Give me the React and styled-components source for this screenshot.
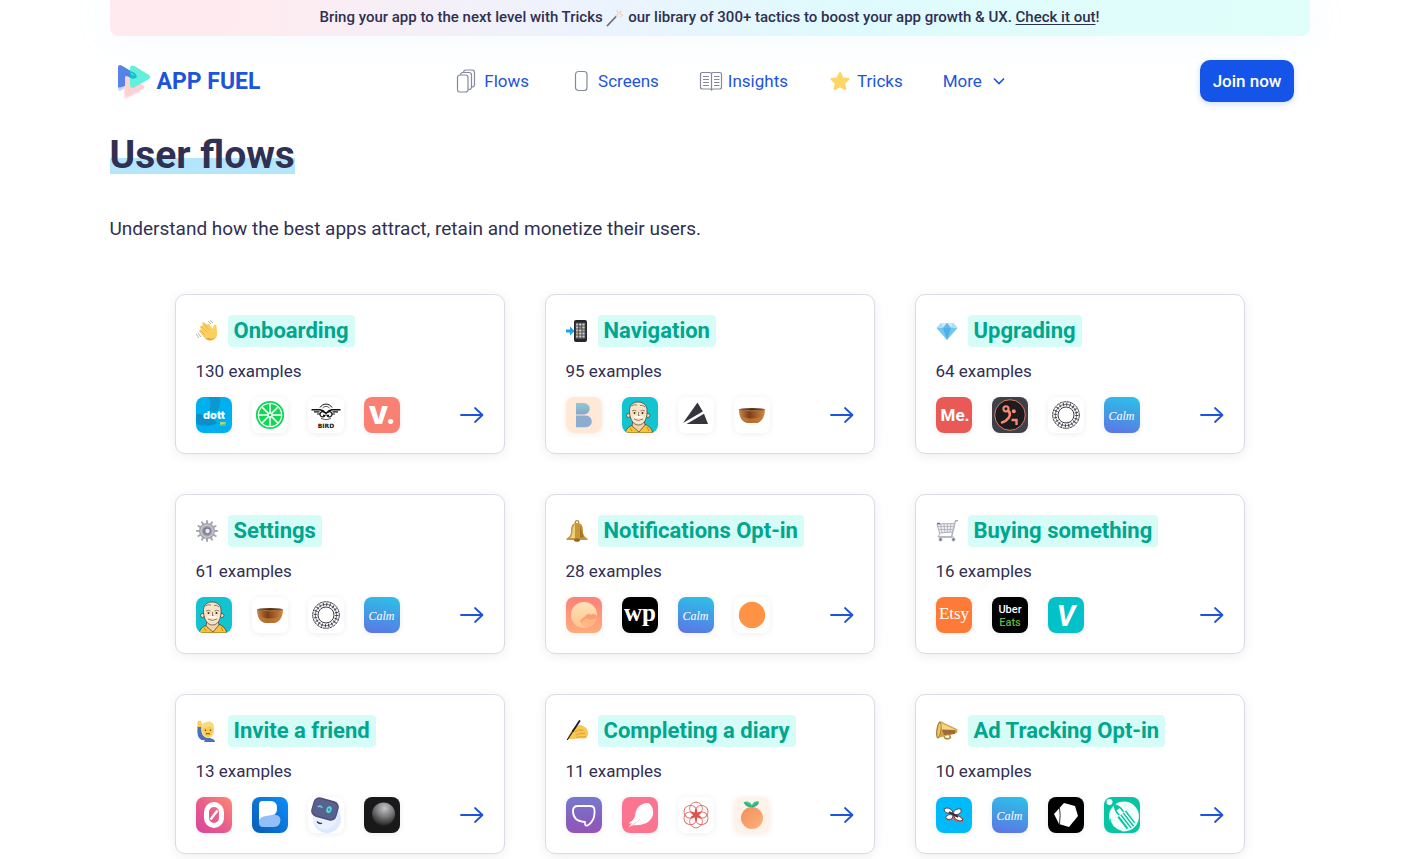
import React from "react";
import styled, { createGlobalStyle } from "styled-components";

const COLORS = {
  ink: "#2f3052",
  blue: "#1d54dc",
  button: "#1554e8",
  teal: "#00a68d",
  mint: "#d6fcf7",
  sky: "#b3e5fc",
  border: "#d9dbe5",
};

const SANS = 'Roboto, "Liberation Sans", sans-serif';

/* ---------- app icons, all on a 36 x 36 grid ---------- */

const Dott = () => (
  <>
    <rect width="36" height="36" fill="#00b0ee" />
    <path d="M12 0H24A17 17 0 0 1 20 15L13 13A12 12 0 0 0 12 0Z" fill="#0d97cf" />
    <path d="M0 17C9 17 17 21 21 26C16 29 9 30 1 27L0 25Z" fill="#0a8fc9" />
    <text x="18" y="22" textAnchor="middle" fontFamily="Inter, sans-serif" fontWeight="800" fontSize="11" fill="#fff">
      dott
    </text>
    <rect x="24" y="25" width="6" height="4" rx="1" fill="#b9d95a" />
    <path d="M24 28L30 26V29H24Z" fill="#4fc3a0" />
  </>
);

const Lime = () => (
  <>
    <rect width="36" height="36" fill="#fff" />
    <circle cx="18" cy="18" r="13.2" fill="none" stroke="#0fd854" strokeWidth="1.8" />
    <circle cx="18" cy="18" r="11" fill="#0fd854" />
    {[0, 45, 90, 135].map((a) => (
      <path key={a} d="M18 6.5V29.5" stroke="#fff" strokeWidth="1.5" transform={`rotate(${a} 18 18)`} />
    ))}
    <circle cx="18" cy="18" r="2.6" fill="#fff" />
    <circle cx="18" cy="18" r="1.3" fill="#0fd854" />
  </>
);

const Bird = () => (
  <>
    <rect width="36" height="36" fill="#fff" />
    <g fill="none" stroke="#111">
      <path d="M12 10.500A7 7 0 0 1 24 10.500" strokeWidth="1" />
      <path d="M14.500 11A4.500 4.500 0 0 1 21.500 11" strokeWidth="0.7" />
      <path d="M3.500 12.800H12Q15 13 18 16.500Q21 13 24 12.800H32.500" strokeWidth="1.400" />
      <path d="M6 14.900H11.500M30 14.900H24.500M9 17H12M27 17H24" strokeWidth="1.100" />
      <path d="M16.500 15.500A2.600 2.600 0 1 0 17 18.300H15M19.500 15.500A2.600 2.600 0 1 1 19 18.300H21" strokeWidth="1.300" />
      <path d="M13 21.500Q18 24 23 21.500" strokeWidth="0.7" />
    </g>
    <text x="18" y="30.500" textAnchor="middle" fontFamily="DejaVu Sans, sans-serif" fontWeight="700" fontSize="6" fill="#111">
      BIRD
    </text>
  </>
);

const Voi = () => (
  <>
    <rect width="36" height="36" fill="#fa8074" />
    <text x="18" y="27" textAnchor="middle" fontFamily="Inter, sans-serif" fontWeight="900" fontSize="25" fill="#fff">
      V.
    </text>
  </>
);

const Balance = () => (
  <>
    <defs>
      <linearGradient id="balance" x1="0" y1="0" x2="0" y2="1">
        <stop offset="0" stopColor="#8ccbd3" />
        <stop offset="1" stopColor="#86a5cb" />
      </linearGradient>
    </defs>
    <rect width="36" height="36" fill="#ffe9d6" />
    <path d="M10 6H18A5.600 5.600 0 0 1 18 17.400H10Z" fill="url(#balance)" />
    <path d="M10 18.600H20A5.800 5.800 0 0 1 20 30.200H10Z" fill="#8cadcf" />
  </>
);

const Monk = () => (
  <>
    <rect width="36" height="36" fill="#12c4d0" />
    <g stroke="#4a3a32" strokeWidth="0.700">
      <path d="M3 36Q5 29 12 28L17 34L22 27Q29 29 31 36Z" fill="#f5c632" />
      <path d="M11 24L10 29L17 35L23 28L22 23Z" fill="#f1d3ae" />
      <circle cx="6.500" cy="18.500" r="2" fill="#f3d8b6" />
      <circle cx="26" cy="18.500" r="2" fill="#f3d8b6" />
      <path d="M7.500 15C7 8 11 5 16 5C22 5 25.500 9 25 15C25 22 22 28 16.500 28C11 28 8 22 7.500 15Z" fill="#f8e3c6" />
    </g>
    <path
      d="M10 14Q12.500 12.500 14.500 14M18.500 14Q20.500 12.500 23 14M16.500 15V19H18M12 22Q16.500 25 21 22M9.500 9Q12 7 15 8M18 8.500Q21 7.500 23 10"
      fill="none"
      stroke="#6b5140"
      strokeWidth="0.700"
    />
    <circle cx="12.500" cy="16" r="1" fill="#3b2c26" />
    <circle cx="20.500" cy="16" r="1" fill="#3b2c26" />
    <path d="M11 20Q16.500 18 22 20L20 21H13Z" fill="#fff" />
    <path d="M8 31L10 34M25 30L27 34" stroke="#d0841f" />
  </>
);

const Peak = () => (
  <>
    <rect width="36" height="36" fill="#fff" />
    <path d="M19.500 5.500L24.800 14.500L5 26Z" fill="#35363d" />
    <path d="M26 16.800L30 27H8.500Z" fill="#35363d" />
  </>
);

const Bowl = () => (
  <>
    <defs>
      <linearGradient id="bowl">
        <stop offset="0" stopColor="#c98a4b" />
        <stop offset=".4" stopColor="#7b3d18" />
        <stop offset="1" stopColor="#d48a45" />
      </linearGradient>
    </defs>
    <rect width="36" height="36" fill="#fff" />
    <path d="M5 12.500H31C31 20 27 25.500 22 26H14C8 25.500 5 20 5 12.500Z" fill="url(#bowl)" />
    <path d="M7 19Q18 24 29 19Q27 25 22 26H14Q8.500 25 7 19Z" fill="#c98035" opacity=".7" />
    <ellipse cx="18" cy="12.500" rx="13" ry="1.500" fill="#5e3117" />
    <path d="M5 12.500Q18 15.500 31 12.500" fill="none" stroke="#dd9f56" strokeWidth=".6" />
  </>
);

const Me = () => (
  <>
    <rect width="36" height="36" fill="#e95a56" />
    <text x="19" y="24" textAnchor="middle" fontFamily={SANS} fontWeight="700" fontSize="17" fill="#fff">
      Me.
    </text>
  </>
);

const Runner = () => (
  <>
    <rect width="36" height="36" fill="#404148" />
    <circle cx="18" cy="18" r="15.300" fill="#1d1b1d" stroke="#d9785f" strokeWidth="1" />
    <g fill="none" stroke="#f58a70" strokeWidth="2.600">
      <circle cx="14" cy="11.800" r="2.600" strokeWidth="2" />
      <path d="M16 13.500Q19.500 17 16.500 21Q14 24.500 10 25.500" strokeLinecap="round" />
      <path d="M19.500 23H24.500V28" strokeWidth="2.400" />
    </g>
    <circle cx="21.800" cy="14.300" r="2" fill="#f58a70" />
  </>
);

const Ring = () => (
  <>
    <rect width="36" height="36" fill="#fff" />
    <g fill="none" stroke="#3b3c46">
      <circle cx="18" cy="18" r="13.300" strokeWidth="1" strokeDasharray="3 .5" />
      <circle cx="18" cy="18" r="10.700" strokeWidth="3.400" strokeDasharray="1 2.360" />
      <circle cx="18" cy="18" r="10.700" strokeWidth=".7" />
      <circle cx="18" cy="18" r="8" strokeWidth="1" />
    </g>
  </>
);

const Calm = () => (
  <>
    <defs>
      <linearGradient id="calm" x1=".6" y1="0" x2=".4" y2="1">
        <stop offset="0" stopColor="#2fbde8" />
        <stop offset=".5" stopColor="#439ce5" />
        <stop offset="1" stopColor="#5c78e6" />
      </linearGradient>
    </defs>
    <rect width="36" height="36" fill="url(#calm)" />
    <text x="17.500" y="22.500" textAnchor="middle" fontFamily="Liberation Serif, serif" fontStyle="italic" fontSize="12" fill="#fff">
      Calm
    </text>
  </>
);

const Sunrise = () => (
  <>
    <defs>
      <linearGradient id="sunBg" x1="0" y1="0" x2="0" y2="1">
        <stop offset="0" stopColor="#fb8278" />
        <stop offset="1" stopColor="#ffac7c" />
      </linearGradient>
      <linearGradient id="sun" x1="0" y1="0" x2="0" y2="1">
        <stop offset="0" stopColor="#fde3b8" />
        <stop offset="1" stopColor="#ffc48d" />
      </linearGradient>
    </defs>
    <rect width="36" height="36" fill="url(#sunBg)" />
    <circle cx="18" cy="18" r="13" fill="url(#sun)" />
    <path d="M14 24Q16 21 19 19.500Q22 15 25 18Q28 15.500 31 19Q30 26 24 29.500Q16 29 14 24Z" fill="#fb9f73" />
    <path d="M15 25Q20 19 25 23Q28 21 30.500 22Q28 29 20 31Q16 29 15 25Z" fill="#ffb684" />
  </>
);

const Post = () => (
  <>
    <rect width="36" height="36" fill="#000" />
    <text x="18" y="24" textAnchor="middle" fontFamily="Liberation Serif, serif" fontWeight="700" fontSize="25" fill="#fff">
      wp
    </text>
  </>
);

const Orb = () => (
  <>
    <rect width="36" height="36" fill="#fff" />
    <circle cx="18" cy="18" r="13.200" fill="#fe9346" />
  </>
);

const Etsy = () => (
  <>
    <rect width="36" height="36" fill="#fd7b36" />
    <text x="18" y="22" textAnchor="middle" fontFamily="Liberation Serif, serif" fontSize="17" fill="#fff">
      Etsy
    </text>
  </>
);

const UberEats = () => (
  <>
    <rect width="36" height="36" fill="#000" />
    <g textAnchor="middle" fontFamily={SANS} fontWeight="500" fontSize="11">
      <text x="18" y="16" fill="#fff">
        Uber
      </text>
      <text x="18" y="29" fill="#60b545">
        Eats
      </text>
    </g>
  </>
);

const Venmo = () => (
  <>
    <rect width="36" height="36" fill="#03c1c8" />
    <text x="18" y="29" textAnchor="middle" fontFamily={SANS} fontWeight="700" fontStyle="italic" fontSize="29" fill="#fff">
      V
    </text>
  </>
);

const Zero = () => (
  <>
    <defs>
      <linearGradient id="zero" x1="1" y1="0" x2="0" y2="1">
        <stop offset="0" stopColor="#fd8a70" />
        <stop offset=".5" stopColor="#e85f8a" />
        <stop offset="1" stopColor="#d8449f" />
      </linearGradient>
    </defs>
    <rect width="36" height="36" fill="url(#zero)" />
    <rect x="10.500" y="7.500" width="15" height="21" rx="7.500" fill="none" stroke="#fff" strokeWidth="5" />
    <path d="M14.500 22.500L21.500 13.500" stroke="#fff" strokeWidth="2.400" />
  </>
);

const Blobs = () => (
  <>
    <defs>
      <linearGradient id="blobs" x1="1" y1="0" x2="0" y2="1">
        <stop offset="0" stopColor="#0a8dfb" />
        <stop offset="1" stopColor="#0a5db4" />
      </linearGradient>
    </defs>
    <rect width="36" height="36" fill="url(#blobs)" />
    <path d="M7 8Q7 4 11 4H18Q25 4 25 11Q25 15 23 18Q28 18 28.500 23Q28 30 22 30H11Q7 30 7 26Z" fill="#93bff8" />
    <path d="M7 8Q7 4 11 4H18Q25 4 25 11Q25 17 20 18Q17 18.500 14 19Q9 19.500 7 23Z" fill="#fff" />
  </>
);

const Robot = () => (
  <>
    <rect width="36" height="36" fill="#fff" />
    <circle cx="19" cy="22" r="14" fill="#dde9fc" />
    <circle cx="17" cy="20" r="12" fill="#e9f1ff" />
    <g transform="rotate(16 17 12)">
      <rect x="4" y="2" width="26" height="20" rx="6" fill="#494f78" />
      <rect x="5" y="3.500" width="24" height="17" rx="5" fill="#5b618e" />
      <path d="M9.500 12Q11.500 9.500 14 11.500" fill="none" stroke="#52d3e8" strokeWidth="1.600" />
      <ellipse cx="21" cy="11.500" rx="2.600" ry="3.400" fill="#4fe0d9" />
      <ellipse cx="21" cy="11.500" rx="1" ry="1.500" fill="#3b88a8" />
    </g>
    <path d="M9 24.500Q11.500 27.500 14 26" fill="none" stroke="#333a5c" strokeWidth="1.400" />
  </>
);

const Planet = () => (
  <>
    <defs>
      <radialGradient id="planet" cx=".55" cy=".25" r=".8">
        <stop offset="0" stopColor="#c6c6c9" />
        <stop offset=".5" stopColor="#747477" />
        <stop offset="1" stopColor="#19191a" />
      </radialGradient>
    </defs>
    <rect width="36" height="36" fill="#19191a" />
    <circle cx="19.500" cy="17" r="11.500" fill="url(#planet)" />
  </>
);

const Chat = () => (
  <>
    <defs>
      <linearGradient id="chat" x1="0" y1="0" x2="0" y2="1">
        <stop offset="0" stopColor="#747bcf" />
        <stop offset=".6" stopColor="#8560bf" />
        <stop offset="1" stopColor="#9554b6" />
      </linearGradient>
    </defs>
    <rect width="36" height="36" fill="url(#chat)" />
    <path
      d="M12 9H24Q28.500 9 28.500 13V16Q28.500 23 23 27.500Q21 29 19.800 28.500Q18.800 28 19 25Q13 24.500 10 22Q7 19 7 14Q7 9 12 9Z"
      fill="none"
      stroke="#fff"
      strokeWidth="1.800"
      strokeLinejoin="round"
    />
  </>
);

const Feather = () => (
  <>
    <rect width="36" height="36" fill="#fb7590" />
    <path
      d="M28 7Q32 12 31 18Q29 25 20 28L24 26Q17 29 12 28Q9 29 7 30Q9 27 10 26Q6 28 8 25Q12 23 13 19Q14 9 21 7Q25 5 28 7Z"
      fill="#fff"
    />
    <path d="M8 29Q15 26 18 22" fill="none" stroke="#fcb1c0" strokeWidth=".7" />
  </>
);

const Flower = () => (
  <>
    <rect width="36" height="36" fill="#fff" />
    <g fill="none" stroke="#e5655f" strokeWidth=".9">
      {[0, 60, 120, 180, 240, 300].map((a) => (
        <circle key={a} cx="18" cy="11.500" r="6.400" transform={`rotate(${a} 18 18)`} />
      ))}
    </g>
    {[0, 60, 120].map((a) => (
      <ellipse key={a} cx="18" cy="18" rx="1.500" ry="6" fill="#e34f4c" transform={`rotate(${a} 18 18)`} />
    ))}
  </>
);

const Peach = () => (
  <>
    <defs>
      <linearGradient id="peach" x1="0" y1="0" x2="1" y2="1">
        <stop offset="0" stopColor="#f08e5c" />
        <stop offset="1" stopColor="#ffb27c" />
      </linearGradient>
    </defs>
    <rect width="36" height="36" fill="#fff3e9" />
    <circle cx="18" cy="21" r="11" fill="url(#peach)" />
    <path d="M17 10.500Q11 10 9.500 5Q15 3 18 8Q20 3 25 4.500Q25 10 17 10.500Z" fill="#3fc492" />
    <path d="M11 6L17 10M24 6L18 10" stroke="#238f6c" strokeWidth=".8" />
  </>
);

const Petals = () => (
  <>
    <rect width="36" height="36" fill="#00baf9" />
    <path d="M9 21Q13 26 17 21.500L20 25L27 25.500Q29 20 22 19L14 18Z" fill="#e7535d" />
    <g stroke="#3a2634" strokeWidth=".8" fill="#fff">
      <path d="M8 12Q13 9 17 15Q15 17.500 11 16Q8 15 8 12Z" />
      <path d="M25 12Q19 11 17 16Q19 19 23 17Q26 15 25 12Z" />
      <path d="M9.500 20Q13 16 17 18Q17 22.500 13 22.500Q10 22 9.500 20Z" />
      <path d="M27 23Q24 18 18 18Q18 22 21 23Q24 25 27 23Z" />
      <path d="M13 15L22 20" strokeWidth="2" />
    </g>
  </>
);

const Stone = () => (
  <>
    <rect width="36" height="36" fill="#000" />
    <path d="M16 6L27 9L30 19L21 30L11 27L6 17Z" fill="#fff" />
    <path d="M11.500 10.500Q12.800 18 11.500 27" fill="none" stroke="#000" strokeWidth=".8" />
  </>
);

const Pencil = () => (
  <>
    <rect width="36" height="36" fill="#05c5a2" />
    <circle cx="20" cy="19.500" r="15" fill="#f2fffb" />
    <circle cx="5.500" cy="5" r="3" fill="#fff" />
    <g transform="rotate(-38 20 19)" fill="#05c5a2">
      <path d="M16 15Q15 8 19.500 3Q24 8 23 15L21.500 16V10H17.500V16Z" />
      <path d="M14 16H16V31H14ZM17.500 16H19V33H17.500ZM20.500 16H22V33H20.500ZM23.500 16H25V31H23.500Z" />
    </g>
    <path d="M6 20Q7 31 18 34Q9 36 5 29Z" fill="#05c5a2" />
  </>
);

const APP_ICONS = {
  dott: Dott,
  lime: Lime,
  bird: Bird,
  voi: Voi,
  balance: Balance,
  monk: Monk,
  peak: Peak,
  bowl: Bowl,
  me: Me,
  runner: Runner,
  ring: Ring,
  calm: Calm,
  sunrise: Sunrise,
  post: Post,
  orb: Orb,
  etsy: Etsy,
  uberEats: UberEats,
  venmo: Venmo,
  zero: Zero,
  blobs: Blobs,
  robot: Robot,
  planet: Planet,
  chat: Chat,
  feather: Feather,
  flower: Flower,
  peach: Peach,
  petals: Petals,
  stone: Stone,
  pencil: Pencil,
};

/* ---------- emoji, all on a 22 x 22 grid ---------- */

const EMOJI = {
  wave: (
    <>
      <path
        d="M4 7Q5 5 7 6L6 3Q7 1.500 9 3L11 5Q11 3 13 4L17 9Q17 5 19 4.500Q21 5 20.500 8Q22 14 20 18Q16 22 11 20Q8 18 3 11Q3 9.500 5 10Z"
        fill="#fbcf60"
      />
      <path d="M5 6L11 12M8 4L13 10M4 10L9 15" stroke="#e6a93d" strokeWidth=".8" fill="none" />
      <path d="M12 1L15 4M14 0L17 3M0 14L3 18M2 13L5 17" stroke="#9da3ad" strokeWidth=".8" />
      <path d="M10 19Q16 22 20 17Q17 20 12 18Z" fill="#e79a3b" />
    </>
  ),
  phone: (
    <>
      <rect x="8" y="0" width="13" height="22" rx="2" fill="#26262b" />
      <rect x="9.500" y="2.500" width="10" height="16.500" fill="#4d4a52" />
      {[3.5, 6.5, 9.5, 12.5, 15.5].map((y, i) => (
        <g key={y}>
          <rect x="10" y={y} width="2.200" height="2" fill={i === 3 ? "#e8a05a" : "#b8c4cf"} />
          <rect x="13.200" y={y} width="2.200" height="2" fill={i === 1 ? "#d9745a" : "#dcd7cb"} />
          <rect x="16.400" y={y} width="2.200" height="2" fill={i === 2 ? "#8bc28d" : "#c3d3de"} />
        </g>
      ))}
      <path d="M0 9.500H4V6.500L8.500 11L4 15.500V12.500H0Z" fill="#209cf0" />
    </>
  ),
  gem: (
    <>
      <path d="M5 3H17L21.500 8L11 20L.5 8Z" fill="#74c6f2" />
      <path d="M5 3L7 8H.5ZM17 3L15 8H21.500Z" fill="#a9def8" />
      <path d="M7 8H15L11 20Z" fill="#4fafe6" />
      <path d="M5 3H11L7 8ZM17 3H11L15 8Z" fill="#c5ecfb" />
      <path d="M11 3L15 8H7Z" fill="#62b9ed" />
    </>
  ),
  gear: (
    <>
      {[0, 30, 60, 90, 120, 150].map((a) => (
        <rect key={a} x="10" y="0" width="2" height="22" rx="1" fill="#a5a6b0" transform={`rotate(${a} 11 11)`} />
      ))}
      <circle cx="11" cy="11" r="8" fill="#a0a1ac" />
      <circle cx="11" cy="11" r="6" fill="none" stroke="#c3c4cc" strokeWidth="1.500" />
      <circle cx="11" cy="11" r="3.800" fill="#7d7e8b" />
      <circle cx="11.500" cy="11" r="2.200" fill="#e8e9ee" />
    </>
  ),
  bell: (
    <>
      <circle cx="11" cy="2.500" r="1.800" fill="none" stroke="#b8862c" strokeWidth="1.300" />
      <path d="M11 3C5 3 5 8 5 12Q5 16 .5 18.500V20H21.500V18.500Q17 16 17 12C17 8 17 3 11 3Z" fill="#c9973b" />
      <path d="M9 4Q6 7 6.500 12Q6 16 4 18H9Z" fill="#f1cf73" />
      <path d="M14 5Q16 12 18 17L14 18Z" fill="#a87627" />
      <ellipse cx="11" cy="20" rx="3" ry="1.800" fill="#96671f" />
    </>
  ),
  cart: (
    <g fill="none" stroke="#aeb0bb">
      <path d="M22 .7H19.500L15.500 17H3" strokeWidth="1.400" />
      <path d="M1 4L18.500 3.500L16.500 12L3.500 13Z" fill="#ececf1" />
      <path d="M1.500 6.500H18M2.500 9.500H17M4.500 4L6 13M8 4L9 13M11.500 4V12.500M15 4L14 12.500" strokeWidth=".8" />
      <path d="M4 13L2 17H18" />
      <circle cx="4.500" cy="19.500" r="1.500" fill="#6e707d" />
      <circle cx="17.500" cy="19.500" r="1.500" fill="#6e707d" />
      <path d="M1 3.500H4" stroke="#6e707d" strokeWidth="1.400" />
    </g>
  ),
  person: (
    <>
      <path d="M1.500 6Q1 12 2 16Q4 21 9 20L8 22H19Q19 19 14 18Q7 18 5.500 12V6Z" fill="#4c70b8" />
      <path d="M1.500 7V2L3 .5L5 1L6 3L5.500 7H2Z" fill="#fbd053" />
      <path d="M5.500 10Q4 3 10 2Q17 0 18 6V11Q18 17 12 18Q6 17 5.500 10Z" fill="#f8d985" />
      <path d="M7 8Q12 8 13.500 5.500Q16 8 17 9Q17.500 16 12 17Q7 16 7 8Z" fill="#fbcb50" />
      <path d="M9.500 9.500V11M14.500 9.500V11M10 14Q12 13 14 14" stroke="#73492a" strokeWidth="1.200" fill="none" />
    </>
  ),
  writing: (
    <>
      <path d="M2 18Q4 11 9 7Q13 3.500 17 6Q22 8 22 13Q22 18 18 18.500Q12 18 7 19Q3 20 2 18Z" fill="#f9c650" />
      <path d="M9 12Q13 8.500 17 10.500M10 15Q14 12.500 19 13.500M10 17.500Q14 16.500 20 17" stroke="#d8902f" strokeWidth=".8" fill="none" />
      <path d="M13.500 1L7 11" stroke="#1c1c22" strokeWidth="1.800" strokeLinecap="round" />
      <path d="M7 11L1.500 19.500" stroke="#1c1c22" strokeWidth="1.200" strokeLinecap="round" />
    </>
  ),
  megaphone: (
    <>
      <path d="M7 14L9 18Q12 20 14.500 17.500L13 14" fill="none" stroke="#b98a34" strokeWidth="1.600" />
      <path d="M4 1L21 9Q22 11 21 13L2 18Z" fill="#d4a244" />
      <path d="M5 3L20 10L4 9Z" fill="#f4d687" />
      <path d="M6 10H19V14L8 15Z" fill="#a06a34" />
      <ellipse cx="2.800" cy="10" rx="2.500" ry="8.500" fill="#b07d2d" transform="rotate(8 3 10)" />
      <ellipse cx="3" cy="10" rx="1.400" ry="7" fill="#ecc971" transform="rotate(8 3 10)" />
    </>
  ),
};

const CARDS = [
  { emoji: "wave", title: "Onboarding", count: 130, apps: ["dott", "lime", "bird", "voi"] },
  { emoji: "phone", title: "Navigation", count: 95, apps: ["balance", "monk", "peak", "bowl"] },
  { emoji: "gem", title: "Upgrading", count: 64, apps: ["me", "runner", "ring", "calm"] },
  { emoji: "gear", title: "Settings", count: 61, apps: ["monk", "bowl", "ring", "calm"] },
  { emoji: "bell", title: "Notifications Opt-in", count: 28, apps: ["sunrise", "post", "calm", "orb"] },
  { emoji: "cart", title: "Buying something", count: 16, apps: ["etsy", "uberEats", "venmo"] },
  { emoji: "person", title: "Invite a friend", count: 13, apps: ["zero", "blobs", "robot", "planet"] },
  { emoji: "writing", title: "Completing a diary", count: 11, apps: ["chat", "feather", "flower", "peach"] },
  { emoji: "megaphone", title: "Ad Tracking Opt-in", count: 10, apps: ["petals", "calm", "stone", "pencil"] },
];

const NAV = [
  {
    label: "Flows",
    icon: (
      <g fill="#fff" stroke="#8589a0" strokeWidth="1.200">
        <rect x="8.500" y="1" width="11" height="17" rx="2.500" />
        <rect x="5.500" y="3.500" width="11" height="17" rx="2.500" />
        <rect x="2.500" y="6" width="10.500" height="17" rx="2.500" />
      </g>
    ),
  },
  {
    label: "Screens",
    icon: <rect x="6.500" y="2.500" width="11.500" height="19" rx="3" fill="none" stroke="#8589a0" strokeWidth="1.200" />,
  },
  {
    label: "Insights",
    icon: (
      <g fill="none" stroke="#8589a0">
        <path
          d="M12.500 4.500Q12 3.500 10.500 3.500H3.500Q1.500 3.500 1.500 5.500V18Q1.500 20 3.500 20H10.500Q12 20 12.500 21Q13 20 14.500 20H20.500Q22.500 20 22.500 18V5.500Q22.500 3.500 20.500 3.500H14.500Q13 3.500 12.500 4.500V20.500"
          strokeWidth="1.200"
        />
        <path d="M4 7.500H10M4 10.500H10M4 13.500H10M4 16.500H10M15 7.500H20.500M15 10.500H20.500M15 13.500H20.500M15 16.500H20.500" />
      </g>
    ),
  },
  {
    label: "Tricks",
    icon: (
      <path
        d="M12 4L14.500 9.300L20.500 10L16.200 14.200L17.300 20L12 17.300L6.700 20L7.800 14.200L3.500 10L9.500 9.300Z"
        fill="#fcd666"
        stroke="#fcd666"
        strokeWidth="2"
        strokeLinejoin="round"
      />
    ),
  },
];

const FlowCard = ({ emoji, title, count, apps }) => (
  <Card href="#">
    <CardHead>
      <Emoji viewBox="0 0 22 22" aria-hidden="true">
        {EMOJI[emoji]}
      </Emoji>
      <CardTitle>{title}</CardTitle>
    </CardHead>
    <Count>{count} examples</Count>
    <CardFoot>
      {apps.map((name) => {
        const Art = APP_ICONS[name];
        return (
          <AppIcon key={name} viewBox="0 0 36 36">
            <Art />
          </AppIcon>
        );
      })}
      <Arrow viewBox="0 0 24 18" aria-hidden="true">
        <path d="M1 9H22M15 2L22.500 9L15 16" />
      </Arrow>
    </CardFoot>
  </Card>
);

const App = () => (
  <>
    <GlobalStyle />
    <Page>
      <Banner>
        Bring your app to the next level with Tricks{" "}
        <Wand viewBox="0 0 18 18" aria-hidden="true">
          <path d="M1.500 16.500L11 6.500" stroke="#6d6e7a" strokeWidth="1.800" strokeLinecap="round" />
          <path d="M10 7.500L12.500 5" stroke="#e8dfe0" strokeWidth="2" />
          <path d="M11 1L12 4L15 2L14 5L17 6L14 8" fill="none" stroke="#f4cfae" />
        </Wand>{" "}
        our library of 300+ tactics to boost your app growth &amp; UX. <a href="#">Check it out</a>!
      </Banner>
      <Header>
        <Logo href="#">
          <LogoMark viewBox="0 -2 34 38" aria-hidden="true">
            <path d="M1 7V25Q1 27.500 4 26.500L17 18L4 5Z" fill="#c9d6fa" />
            <path d="M7 20V33Q7 36 10 34.500L25 27Z" fill="#ffe5e8" />
            <path d="M1 4Q1 0 4.500 1.500L14 7Q17 9 17 12V15L8 14V22L3 23.500Q1 24 1 22Z" fill="#5583e8" />
            <path d="M8 14Q8 11 11 12.500L26 21Q29 23 26 25L12 32Q8 34 8 30Z" fill="#ffd0d5" />
            <path d="M13 5Q13 0 17.500 2L32 11Q34.500 13 32 15L17 23.500Q13 25 13 20Z" fill="#62f0dc" />
            <path d="M13 7Q19 8 20 13Q18 16 13 14Z" fill="#17bfd0" />
            <path d="M14 10Q16 9 17 11.500" fill="none" stroke="#62f0dc" />
          </LogoMark>
          APP FUEL
        </Logo>
        <Nav>
          {NAV.map(({ label, icon }) => (
            <NavLink key={label} href="#">
              <NavIcon viewBox="0 0 24 24" aria-hidden="true">
                {icon}
              </NavIcon>
              {label}
            </NavLink>
          ))}
          <MoreButton type="button">
            More
            <Chevron viewBox="0 0 12 8" aria-hidden="true">
              <path d="M1 1.500L6 6.500L11 1.500" />
            </Chevron>
          </MoreButton>
        </Nav>
        <JoinButton type="button">Join now</JoinButton>
      </Header>
      <main>
        <Title>User flows</Title>
        <Lead>Understand how the best apps attract, retain and monetize their users.</Lead>
        <Grid>
          {CARDS.map((card) => (
            <FlowCard key={card.title} {...card} />
          ))}
        </Grid>
      </main>
    </Page>
  </>
);

const GlobalStyle = createGlobalStyle`
  * {
    box-sizing: border-box;
  }

  html {
    scrollbar-width: none;
  }

  body {
    margin: 0;
    background: #fff;
    color: ${COLORS.ink};
    font-family: ${SANS};
  }
`;

const Page = styled.div`
  max-width: 1200px;
  margin: 0 auto;
  padding-bottom: 40px;
`;

const Banner = styled.div`
  height: 36px;
  border-radius: 0 0 8px 8px;
  background: linear-gradient(95deg, #ffebef 10%, #ecf3fe 40%, #dffafd 62%, #e0fffa 100%);
  box-shadow: 0 0 40px rgba(130, 200, 255, 0.1);
  text-align: center;
  font-size: 15px;
  font-weight: 500;
  line-height: 34px;

  a {
    color: inherit;
    text-underline-offset: 2px;
  }
`;

const Wand = styled.svg`
  width: 18px;
  height: 18px;
  vertical-align: middle;
`;

const Header = styled.header`
  display: flex;
  align-items: center;
  justify-content: space-between;
  padding: 24px 15px 24px 7px;
`;

const Logo = styled.a`
  display: flex;
  align-items: center;
  gap: 6px;
  color: ${COLORS.blue};
  font-size: 23px;
  font-weight: 700;
  text-decoration: none;
`;

const LogoMark = styled.svg`
  width: 34px;
  height: 38px;
`;

const Nav = styled.nav`
  display: flex;
  align-items: center;
  gap: 40px;
`;

const NavLink = styled.a`
  display: flex;
  align-items: center;
  gap: 5px;
  color: ${COLORS.blue};
  font-size: 17px;
  text-decoration: none;
`;

const MoreButton = styled.button`
  display: flex;
  align-items: center;
  gap: 11px;
  padding: 0;
  border: none;
  background: none;
  color: ${COLORS.blue};
  font: inherit;
  font-size: 17px;
`;

const NavIcon = styled.svg`
  width: 24px;
  height: 24px;
`;

const Chevron = styled.svg`
  width: 12px;
  height: 8px;
  fill: none;
  stroke: currentColor;
  stroke-width: 1.6;
`;

const JoinButton = styled.button`
  height: 42px;
  padding: 0 13px;
  border: none;
  border-radius: 10px;
  background: ${COLORS.button};
  box-shadow: 0 2px 6px rgba(21, 84, 232, 0.2);
  color: #fff;
  font: inherit;
  font-size: 17px;
  font-weight: 500;
`;

const Title = styled.h1`
  width: fit-content;
  margin: 10px 0 0;
  background: linear-gradient(transparent 22px, ${COLORS.sky} 22px);
  font-size: 39px;
  font-weight: 700;
  line-height: 38px;
`;

const Lead = styled.p`
  margin: 41px 0 51px;
  font-size: 19px;
  line-height: 28px;
`;

const Grid = styled.div`
  display: grid;
  grid-template-columns: repeat(3, 1fr);
  gap: 40px;
  padding: 0 65px;
`;

const Card = styled.a`
  padding: 20px;
  border: 1px solid ${COLORS.border};
  border-radius: 10px;
  background: #fff;
  box-shadow: 0 2px 12px rgba(20, 20, 60, 0.07);
  color: inherit;
  text-decoration: none;
`;

const CardHead = styled.div`
  display: flex;
  align-items: center;
  gap: 10px;
`;

const Emoji = styled.svg`
  width: 22px;
  height: 22px;
`;

const CardTitle = styled.h2`
  margin: 0;
  padding: 0 6px;
  border-radius: 4px;
  background: ${COLORS.mint};
  color: ${COLORS.teal};
  font-size: 22px;
  font-weight: 700;
  line-height: 32px;
`;

const Count = styled.p`
  margin: 12px 0 14px;
  font-size: 17px;
  line-height: 24px;
`;

const CardFoot = styled.div`
  display: flex;
  align-items: center;
  gap: 20px;
`;

const AppIcon = styled.svg`
  width: 36px;
  height: 36px;
  border-radius: 8px;
  box-shadow: 0 1px 6px rgba(40, 40, 80, 0.08);
`;

const Arrow = styled.svg`
  width: 24px;
  height: 18px;
  margin-left: auto;
  fill: none;
  stroke: ${COLORS.blue};
  stroke-width: 1.8;
  stroke-linecap: round;
  stroke-linejoin: round;
`;

export default App;
